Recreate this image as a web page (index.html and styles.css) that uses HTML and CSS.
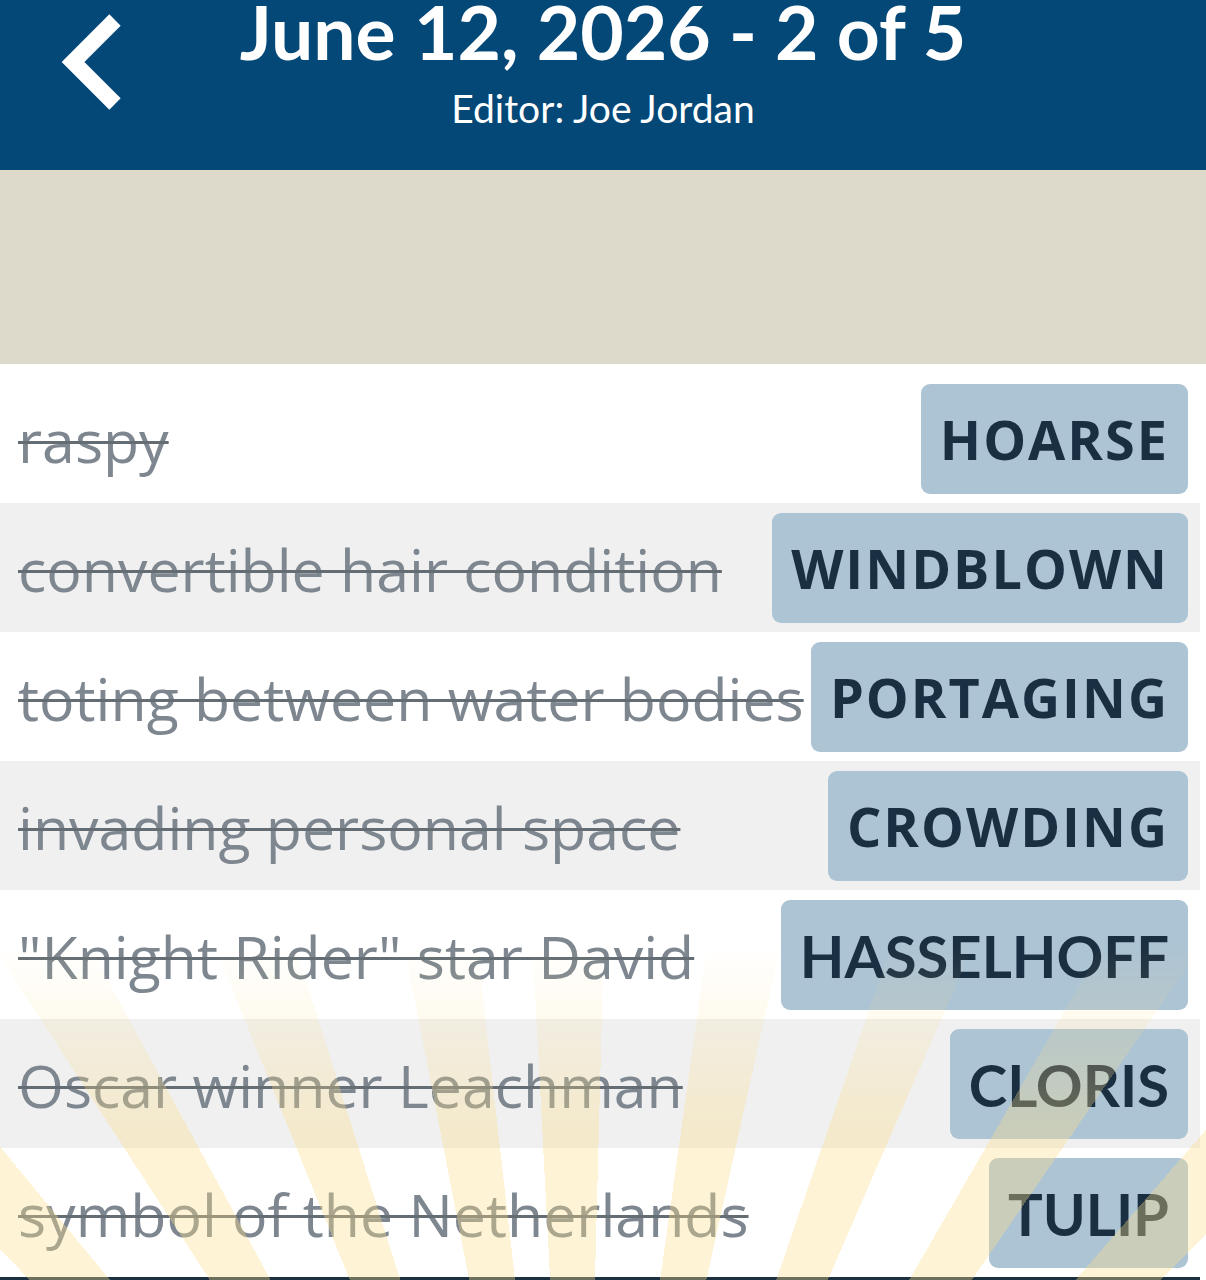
FILE: index.html
```html
<!DOCTYPE html>
<html>
  <head>
    <link rel="stylesheet" href="styles.css">
  </head>
  <body>
    <div class="screen">
      <header class="topbar">
        <a class="back" href="#">
          <svg viewBox="0 0 70 100" width="70" height="100">
            <polyline points="56,8 14,50 56,92" fill="none" stroke="#fff" stroke-width="16" stroke-linejoin="miter" stroke-linecap="butt"/>
          </svg>
        </a>
        <div class="titles">
          <h1>June 12, 2026 - 2 of 5</h1>
          <div class="editor">Editor: Joe Jordan</div>
        </div>
      </header>
      <div class="banner"></div>
      <ul class="clues">
        <li class="clue"><span class="hint">raspy</span><span class="answer">HOARSE</span></li>
        <li class="clue"><span class="hint">convertible hair condition</span><span class="answer">WINDBLOWN</span></li>
        <li class="clue"><span class="hint">toting between water bodies</span><span class="answer">PORTAGING</span></li>
        <li class="clue"><span class="hint">invading personal space</span><span class="answer">CROWDING</span></li>
        <li class="clue"><span class="hint">"Knight Rider" star David</span><span class="answer narrow">HASSELHOFF</span></li>
        <li class="clue"><span class="hint">Oscar winner Leachman</span><span class="answer narrow">CLORIS</span></li>
        <li class="clue"><span class="hint">symbol of the Netherlands</span><span class="answer narrow">TULIP</span></li>
      </ul>
      <div class="rays"></div>
    </div>
  </body>
</html>
```

FILE: styles.css
```css
body {
  margin: 0;
  background: #fff;
  font-family: "Open Sans", "Noto Sans", sans-serif;
}
.screen {
  position: relative;
  width: 1206px;
  height: 1280px;
  overflow: hidden;
}
.topbar {
  height: 170px;
  background-color: #044878;
  color: #fff;
  display: flex;
  justify-content: center;
  position: relative;
}
.back {
  position: absolute;
  left: 59px;
  top: 12px;
  display: block;
  width: 70px;
  height: 100px;
}
.titles {
  text-align: center;
  padding-top: 1px;
}
.titles h1 {
  margin: 0;
  font-family: Lato, sans-serif;
  font-weight: 700;
  font-size: 75px;
  line-height: 60px;
}
.editor {
  font-family: Lato, sans-serif;
  font-size: 39px;
  line-height: 44px;
  margin-top: 25px;
}
.banner {
  height: 194px;
  background-color: #dedacb;
}
.clues {
  list-style: none;
  margin: 0;
  padding: 10px 0 0 0;
  width: 1200px;
}
.clue {
  height: 129px;
  display: flex;
  align-items: flex-start;
  justify-content: space-between;
  padding: 0 12px 0 18px;
}
.clue:nth-child(even) {
  background-color: #f0f0f0;
}
.clue:last-child {
  border-bottom: 4px solid #1c3140;
}
.hint {
  align-self: center;
  margin-top: 2px;
  font-size: 59px;
  color: #7e878f;
  white-space: nowrap;
  text-decoration: line-through;
  text-decoration-color: #646d74;
  text-decoration-thickness: 3px;
}
.answer {
  margin-top: 10px;
  height: 110px;
  display: flex;
  align-items: center;
  padding: 0 19px;
  background-color: #adc4d4;
  border-radius: 9px;
  color: #1b2f42;
  font-weight: 700;
  font-size: 54px;
  letter-spacing: 2px;
}
.answer.narrow {
  font-family: Lato, sans-serif;
  font-size: 58px;
  letter-spacing: 0;
}
.rays {
  position: absolute;
  left: 0;
  top: 900px;
  width: 1206px;
  height: 380px;
  pointer-events: none;
  background: repeating-conic-gradient(from -3deg at 580px 950px,
    rgba(252, 222, 140, 0.36) 0deg 4.5deg,
    transparent 4.5deg 11deg);
  -webkit-mask-image: linear-gradient(to top, #000 40%, transparent 88%);
  mask-image: linear-gradient(to top, #000 40%, transparent 88%);
}
```
